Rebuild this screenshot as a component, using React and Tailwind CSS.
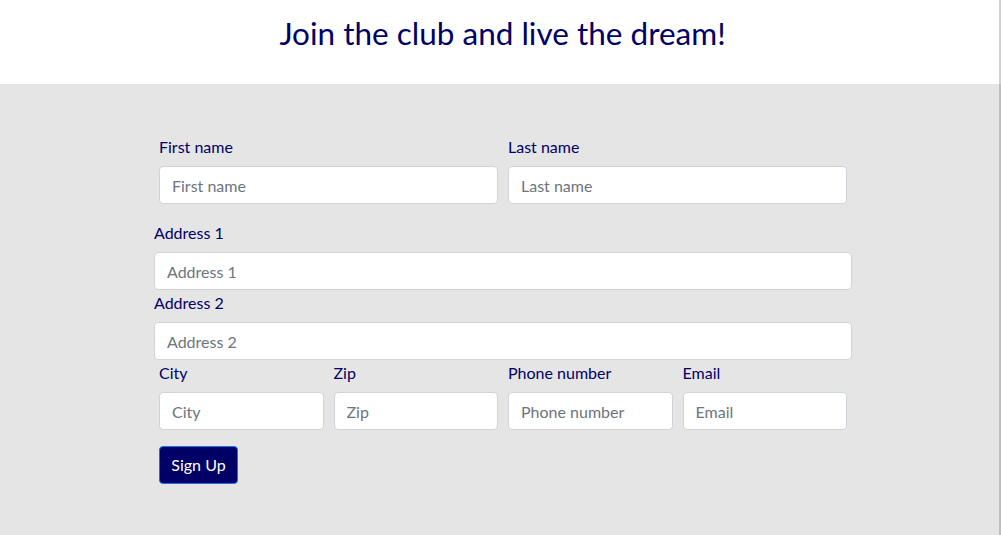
import React from "react";

const inputCls =
  "block w-full h-[38px] px-3 py-[6px] text-[16px] leading-6 bg-white border border-[#ced4da] rounded-[4px] text-[#495057] placeholder:text-[#6c757d] outline-none";
const labelCls = "block text-[16px] leading-6 text-[#000066] mb-[7px]";

function Field({ label, ph, className = "" }) {
  return (
    <div className={className}>
      <label className={labelCls}>{label}</label>
      <input className={inputCls} placeholder={ph} />
    </div>
  );
}

export default function App() {
  return (
    <div
      className="flex w-[1001px] h-[535px] overflow-hidden"
      style={{ fontFamily: "Lato, 'Open Sans', sans-serif" }}
    >
      <div className="flex flex-col w-[999px] h-full">
        <header className="h-[84px] bg-white flex justify-center pl-[6px] pt-[15px]">
          <h1 className="text-[31.5px] leading-[1.2] text-[#000066] font-normal">
            Join the club and live the dream!
          </h1>
        </header>
        <main className="flex-1 bg-[#e5e5e5] pt-[51px]">
          <form className="ml-[154px] w-[698px]">
            <div className="grid grid-cols-2 mb-[17px]">
              <Field label="First name" ph="First name" className="px-[5px]" />
              <Field label="Last name" ph="Last name" className="px-[5px]" />
            </div>
            <Field label="Address 1" ph="Address 1" />
            <Field label="Address 2" ph="Address 2" className="mt-[1px]" />
            <div className="grid grid-cols-4 mt-[1px]">
              <Field label="City" ph="City" className="px-[5px]" />
              <Field label="Zip" ph="Zip" className="px-[5px]" />
              <Field label="Phone number" ph="Phone number" className="px-[5px]" />
              <Field label="Email" ph="Email" className="px-[5px]" />
            </div>
            <div className="px-[5px] mt-4">
              <button
                type="button"
                className="h-[38px] w-[79px] text-[16px] leading-6 text-white bg-[#000066] border border-[#1a6fe0] rounded-[4px]"
              >
                Sign Up
              </button>
            </div>
          </form>
        </main>
      </div>
      <div className="w-[2px] h-full flex flex-col">
        <div className="h-[84px] bg-[#d0d0d0]" />
        <div className="flex-1 bg-[#bdbdbd]" />
      </div>
    </div>
  );
}
